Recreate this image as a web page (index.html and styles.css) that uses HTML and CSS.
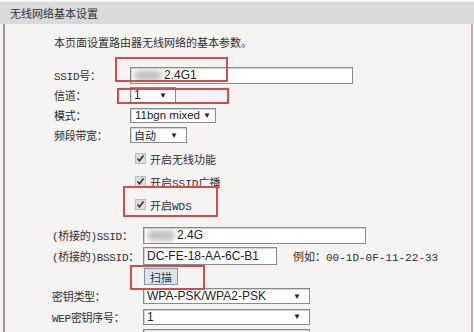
FILE: index.html
```html
<!DOCTYPE html>
<html lang="zh-CN">
<head>
  <meta charset="UTF-8" />
  <title>无线网络基本设置</title>
  <link rel="stylesheet" href="styles.css">
</head>
<body>
  <div class="titlebar">无线网络基本设置</div>
  <div class="panel">
    <p class="intro">本页面设置路由器无线网络的基本参数。</p>

    <div class="form basic">
      <div class="row">
        <label>SSID号：</label>
        <div class="input ssid"><span class="blur"></span>2.4G1</div>
      </div>
      <div class="row">
        <label>信道：</label>
        <div class="select channel"><span>1</span><span class="arrow">▼</span></div>
      </div>
      <div class="row">
        <label>模式：</label>
        <div class="select mode"><span>11bgn mixed</span><span class="arrow">▼</span></div>
      </div>
      <div class="row">
        <label>频段带宽：</label>
        <div class="select band"><span class="cn">自动</span><span class="arrow">▼</span></div>
      </div>
    </div>

    <div class="checks">
      <div class="check-row"><span class="check"><svg width="9" height="9" viewBox="0 0 9 9"><path d="M1.5 4.5 L3.5 6.8 L7.5 1.5" fill="none" stroke="#333" stroke-width="1.6"/></svg></span>开启无线功能</div>
      <div class="check-row"><span class="check"><svg width="9" height="9" viewBox="0 0 9 9"><path d="M1.5 4.5 L3.5 6.8 L7.5 1.5" fill="none" stroke="#333" stroke-width="1.6"/></svg></span>开启SSID广播</div>
      <div class="check-row"><span class="check"><svg width="9" height="9" viewBox="0 0 9 9"><path d="M1.5 4.5 L3.5 6.8 L7.5 1.5" fill="none" stroke="#333" stroke-width="1.6"/></svg></span>开启WDS</div>
    </div>

    <div class="form bridge">
      <div class="row">
        <label>(桥接的)SSID：</label>
        <div class="input bssid-name"><span class="blur"></span>2.4G</div>
      </div>
      <div class="row tall">
        <label>(桥接的)BSSID：</label>
        <div class="input mac">DC-FE-18-AA-6C-B1</div>
        <span class="hint">例如：00-1D-0F-11-22-33</span>
      </div>
      <div class="row">
        <label></label>
        <button class="scan">扫描</button>
      </div>
      <div class="row">
        <label>密钥类型：</label>
        <div class="select key"><span>WPA-PSK/WPA2-PSK</span><span class="arrow">▼</span></div>
      </div>
      <div class="row tall">
        <label>WEP密钥序号：</label>
        <div class="select key"><span>1</span><span class="arrow">▼</span></div>
      </div>
      <div class="row">
        <label>认证类型：</label>
        <div class="select key"><span class="cn">自动</span><span class="arrow">▼</span></div>
      </div>
    </div>

    <!-- red highlight marks drawn over the form -->
    <div class="mark m1"></div>
    <div class="mark m2"></div>
    <div class="mark m3"></div>
    <div class="mark m4"></div>
  </div>
</body>
</html>
```

FILE: styles.css
```css
* {
  box-sizing: border-box;
}

body {
  margin: 0;
  background: #f2f2f2;
  font-family: "Liberation Mono", "Noto Sans CJK SC", monospace;
  font-size: 11px;
  color: #2e2e2e;
  overflow: hidden;
}

.titlebar {
  margin-top: 2px;
  height: 22px;
  line-height: 22px;
  padding-left: 10px;
  background: #d9d9d9;
  font-family: "Noto Sans CJK SC", sans-serif;
  font-size: 11px;
  color: #333;
}

.panel {
  position: relative;
  margin: 0 1px 0 3px;
  height: 320px;
  padding: 11px 0 0 49px;
  background: #f5f4f3;
  border-left: 2px solid #a98f8f;
  border-right: 2px solid #c9abab;
}

.intro {
  margin: 0 0 16px;
  line-height: 14px;
  font-family: "Noto Sans CJK SC", sans-serif;
}

.row {
  display: flex;
  align-items: center;
  height: 20px;
  white-space: nowrap;
}

.row.tall {
  height: 21px;
}

label {
  letter-spacing: -0.3px;
}

.basic label {
  width: 76px;
  flex: none;
}

.bridge {
  margin-top: 9px;
}

.bridge label {
  width: 91px;
  flex: none;
  margin-left: -2px;
}

.input,
.select {
  display: flex;
  align-items: center;
  flex: none;
  background: #fff;
  border: 1px solid #848c8c;
  box-shadow: inset 1px 1px 0 #cfd3d3;
  font-family: "Liberation Sans", Arial, sans-serif;
  font-size: 12px;
  color: #222;
  padding: 0 3px;
  height: 17px;
  white-space: nowrap;
  overflow: hidden;
}

.select {
  justify-content: space-between;
  height: 16px;
}

.cn {
  font-family: "Noto Sans CJK SC", sans-serif;
  font-size: 11px;
}

.arrow {
  font-size: 8px;
  margin-right: 5px;
}

.ssid { width: 223px; }
.channel { width: 46px; }
.mode { width: 86px; height: 15px; font-size: 11.5px; padding-left: 4px; }
.mode .arrow { margin-right: 1px; }
.band { width: 57px; }
.bssid-name { width: 223px; }
.mac { width: 134px; height: 18px; }
.key { width: 167px; }

.blur {
  display: inline-block;
  width: 28px;
  height: 11px;
  margin-right: 2px;
  background: #c4c4c4;
  border-radius: 5px;
  filter: blur(2.5px);
}

.hint {
  margin-left: 16px;
}

.checks {
  padding: 2px 0 0 81px;
}

.check-row {
  display: flex;
  align-items: center;
  height: 23px;
}

.check {
  display: inline-flex;
  align-items: center;
  justify-content: center;
  width: 11px;
  height: 11px;
  margin-right: 4px;
  background: #dcdcdc;
  border: 1px solid #bdbdbd;
}

.scan {
  width: 34px;
  height: 17px;
  margin-left: 1px;
  padding: 0;
  background: #d9e4f0;
  border: 1px solid #8795a5;
  font-family: "Noto Sans CJK SC", sans-serif;
  font-size: 11px;
  color: #333;
}

.mark {
  position: absolute;
  border: 2px solid #d24b4f;
}

.m1 { left: 110px; top: 33px; width: 113px; height: 25px; }
.m2 { left: 112px; top: 64px; width: 112px; height: 16px; }
.m3 { left: 118px; top: 162px; width: 95px; height: 31px; }
.m4 { left: 125px; top: 241px; width: 75px; height: 25px; }
```
